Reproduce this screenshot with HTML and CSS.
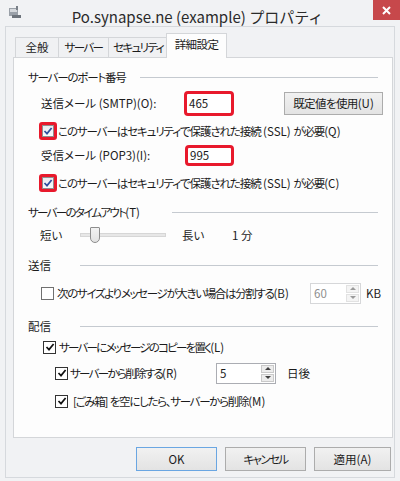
FILE: index.html
```html
<!DOCTYPE html>
<html lang="ja">
<head>
<meta charset="utf-8">
<title>プロパティ</title>
<link rel="stylesheet" href="styles.css">
</head>
<body>
<div class="titlebar">
  <svg class="appicon" width="14" height="13" viewBox="0 0 14 13">
    <rect x="1" y="2" width="9" height="8" fill="#9aa0a8"/>
    <rect x="2" y="3" width="7" height="3" fill="#d5d8dc"/>
    <rect x="4" y="9" width="9" height="3" fill="#6d737b"/>
    <rect x="8" y="0" width="2" height="4" fill="#7a8088"/>
  </svg>
  <div class="title">Po.synapse.ne (example) プロパティ</div>
  <div class="close">
    <svg width="9" height="9" viewBox="0 0 9 9"><path d="M1 1 L8 8 M8 1 L1 8" stroke="#fff" stroke-width="2"/></svg>
  </div>
</div>
<div class="client">
  <div class="tabs">
    <div class="tab t1">全般</div>
    <div class="tab t2"><span class="ls-kata">サーバー</span></div>
    <div class="tab t3"><span class="ls-kata">セキュリティ</span></div>
    <div class="tab active"><span class="ls-kanji">詳細設定</span></div>
  </div>
  <div class="panel">
    <div class="group-head gh-port"><span class="gh-label w-port"><span class="j-port">サーバーのポート番号</span></span><i class="rule"></i></div>

    <div class="row r-smtp">
      <span class="port-label">送信メール (SMTP)(O):</span>
      <div class="field hl f-smtp">465</div>
      <div class="btn btn-default"><span class="ls-kanji">既定値を使用</span>(U)</div>
    </div>

    <div class="row r-cb1">
      <span class="cb-hl"><span class="cb blue"><svg width="10" height="10" viewBox="0 0 10 10"><path d="M1.5 5 L4 7.6 L8.6 2" fill="none" stroke="#2e4f9e" stroke-width="1.7"/></svg></span></span>
      <span class="cb-text"><span class="j-ssl">このサーバーはセキュリティで保護された接続</span> (SSL) <span class="j-ssl">が必要</span>(Q)</span>
    </div>

    <div class="row r-pop">
      <span class="port-label">受信メール (POP3)(I):</span>
      <div class="field hl f-pop">995</div>
    </div>

    <div class="row r-cb2">
      <span class="cb-hl"><span class="cb blue"><svg width="10" height="10" viewBox="0 0 10 10"><path d="M1.5 5 L4 7.6 L8.6 2" fill="none" stroke="#2e4f9e" stroke-width="1.7"/></svg></span></span>
      <span class="cb-text"><span class="j-ssl">このサーバーはセキュリティで保護された接続</span> (SSL) <span class="j-ssl">が必要</span>(C)</span>
    </div>

    <div class="group-head gh-timeout"><span class="gh-label w-timeout"><span class="j-timeout">サーバーのタイムアウト</span>(T)</span><i class="rule"></i></div>

    <div class="row r-slider">
      <span class="sl-short">短い</span>
      <div class="track"><span class="thumb"></span></div>
      <span class="sl-long">長い</span>
      <span class="sl-val">1 分</span>
    </div>

    <div class="group-head gh-send"><span class="gh-label w-short">送信</span><i class="rule"></i></div>

    <div class="row r-split">
      <span class="cb plain gray"></span>
      <span class="split-label"><span class="j-split">次のサイズよりメッセージが大きい場合は分割する</span>(B)</span>
      <div class="spin disabled s-split">
        <span class="spin-val">60</span>
        <span class="spin-btns"><span class="sb up"></span><span class="sb down"></span></span>
      </div>
      <span class="unit">KB</span>
    </div>

    <div class="group-head gh-deliver"><span class="gh-label w-short">配信</span><i class="rule"></i></div>

    <div class="row r-copy">
      <span class="cb plain"><svg width="10" height="10" viewBox="0 0 10 10"><path d="M1.5 5 L4 7.6 L8.6 2" fill="none" stroke="#111" stroke-width="1.7"/></svg></span>
      <span class="cb-text"><span class="j-copy">サーバーにメッセージのコピーを置く</span>(L)</span>
    </div>

    <div class="row r-del">
      <span class="cb plain"><svg width="10" height="10" viewBox="0 0 10 10"><path d="M1.5 5 L4 7.6 L8.6 2" fill="none" stroke="#111" stroke-width="1.7"/></svg></span>
      <span class="del-label"><span class="j-del">サーバーから削除する</span>(R)</span>
      <div class="spin s-days">
        <span class="spin-val">5</span>
        <span class="spin-btns"><span class="sb up"></span><span class="sb down"></span></span>
      </div>
      <span class="days">日後</span>
    </div>

    <div class="row r-trash">
      <span class="cb plain"><svg width="10" height="10" viewBox="0 0 10 10"><path d="M1.5 5 L4 7.6 L8.6 2" fill="none" stroke="#111" stroke-width="1.7"/></svg></span>
      <span class="cb-text"><span class="j-trash">[ごみ箱]</span> <span class="j-trash">を空にしたら、サーバーから削除</span>(M)</span>
    </div>
  </div>

  <div class="buttons">
    <div class="btn b-ok">OK</div>
    <div class="btn b-cancel"><span class="ls-kata">キャンセル</span></div>
    <div class="btn b-apply">適用(A)</div>
  </div>
</div>
</body>
</html>
```

FILE: styles.css
```css
* { box-sizing: border-box; }

body {
  margin: 0;
  width: 400px;
  height: 481px;
  overflow: hidden;
  background: #f1f2f4;
  font-family: "Noto Sans CJK JP", "Noto Sans", sans-serif;
  font-size: 11.5px;
  color: #1b1b1b;
  font-feature-settings: "palt";
}

/* letter-spacing on Japanese runs, tuned to match the narrow UI font */
.ls-kata { letter-spacing: -1.6px; }
.ls-kanji { letter-spacing: -0.6px; }
.j-port { letter-spacing: -1.2px; }
.j-ssl { letter-spacing: -1.1px; }
.j-timeout { letter-spacing: -1.7px; }
.j-split { letter-spacing: -1.35px; }
.j-copy { letter-spacing: -1.8px; }
.j-del { letter-spacing: -1.7px; }
.j-trash { letter-spacing: -1.3px; }

/* title bar */
.titlebar {
  height: 26px;
  display: flex;
  align-items: flex-start;
}
.appicon { margin: 6px 0 0 8px; flex: none; }
.title {
  flex: 1;
  text-align: center;
  font-size: 15px;
  line-height: 20px;
  margin-top: 7px;
  color: #2a2a2a;
  white-space: nowrap;
  font-feature-settings: normal;
}
.close {
  width: 27px;
  height: 20px;
  background: #c7484b;
  display: flex;
  align-items: center;
  justify-content: center;
  flex: none;
}

/* client frame */
.client {
  margin-left: 5px;
  width: 390px;
  height: 452px;
  border: 1px solid #d6d9dd;
  padding: 6px 0 0 7px;
}

.tabs {
  display: flex;
  align-items: flex-end;
  height: 24px;
  padding-left: 2px;
}
.tab {
  height: 20px;
  border: 1px solid #d4d6d9;
  border-bottom: none;
  background: #f0f1f3;
  margin-right: -1px;
  text-align: center;
  line-height: 19px;
  white-space: nowrap;
}
.t1 { width: 44px; }
.t2 { width: 51px; }
.t3 { width: 60px; }
.tab.active {
  width: 61px;
  height: 25px;
  margin-bottom: -1px;
  margin-left: -1px;
  background: #fdfdfd;
  position: relative;
  z-index: 1;
  line-height: 21px;
}

.panel {
  width: 380px;
  height: 381px;
  border: 1px solid #d4d6d9;
  background: #fdfdfd;
  padding: 0 14px 0 14px;
}

/* group headers */
.group-head {
  display: flex;
  align-items: center;
  height: 16px;
}
.gh-label { flex: none; white-space: nowrap; }
.w-port { width: 112px; }
.w-timeout { width: 144px; }
.w-short { width: 52px; }
.rule {
  flex: 1;
  height: 1px;
  background: #c5cad0;
}
.gh-port { margin-top: 11px; }
.gh-timeout { margin-top: 11px; }
.gh-send { margin-top: 13px; }
.gh-deliver { margin-top: 14px; }

/* rows */
.row {
  display: flex;
  align-items: center;
  white-space: nowrap;
}
.r-smtp { height: 26px; margin-top: 5px; padding-left: 13px; }
.r-cb1 { height: 20px; margin-top: 5px; padding-left: 11px; }
.r-pop { height: 22px; margin-top: 3px; padding-left: 13px; }
.r-cb2 { height: 20px; margin-top: 7px; padding-left: 11px; }
.r-slider { height: 18px; margin-top: 6px; padding-left: 12px; }
.r-split { height: 22px; margin-top: 9px; padding-left: 13px; }
.r-copy { height: 20px; margin-top: 3px; padding-left: 15px; }
.r-del { height: 22px; margin-top: 5px; padding-left: 27px; }
.r-trash { height: 20px; margin-top: 7px; padding-left: 27px; }

.port-label { width: 143px; flex: none; }

.field {
  background: #fff;
  display: flex;
  align-items: center;
  padding-left: 2px;
  flex: none;
}
.hl {
  border: 3px solid #e8192c;
  border-radius: 4px;
}
.f-smtp { width: 50px; height: 25px; }
.f-pop { width: 49px; height: 21px; margin-left: 1px; }

.btn {
  display: flex;
  align-items: center;
  justify-content: center;
  background: linear-gradient(#f1f1f1, #e3e3e3);
  border: 1px solid #acacac;
  flex: none;
  white-space: nowrap;
}
.btn-default { width: 99px; height: 23px; margin-left: 50px; }

/* checkboxes */
.cb {
  width: 13px;
  height: 13px;
  background: #fff;
  border: 1px solid #333;
  display: flex;
  align-items: center;
  justify-content: center;
  flex: none;
}
.cb.gray { border-color: #707070; }
.cb.blue {
  width: 12px;
  height: 12px;
  border-color: #8e8f8f;
  background: linear-gradient(#e9ecf1, #fafbfc);
}
.cb-hl {
  width: 18px;
  height: 18px;
  border: 3px solid #e8192c;
  border-radius: 3px;
  display: flex;
  align-items: center;
  justify-content: center;
  flex: none;
}
.cb-hl + .cb-text { margin-left: 1px; }
.cb.plain + .cb-text { margin-left: 3px; }
.r-del .cb.plain, .r-trash .cb.plain { margin-right: 2px; }
.r-trash .cb-text { margin-left: 1px; }

/* slider */
.sl-short { width: 40px; flex: none; }
.track {
  position: relative;
  width: 86px;
  height: 4px;
  background: #e7e7e7;
  border: 1px solid #d6d6d6;
  flex: none;
}
.thumb {
  position: absolute;
  left: 9px;
  top: -7px;
  width: 10px;
  height: 16px;
  background: linear-gradient(#f2f2f2, #e2e2e2);
  border: 1px solid #8d8d8d;
  border-radius: 1px 1px 5px 5px;
}
.sl-long { margin-left: 16px; width: 50px; flex: none; }
.sl-val { flex: none; }

/* spinners */
.split-label { width: 253px; flex: none; margin-left: 3px; }
.spin {
  display: flex;
  height: 21px;
  background: #fff;
  border: 1px solid #abadb3;
  flex: none;
}
.spin.disabled { border-color: #d6d7d9; color: #8f8f8f; }
.s-split { width: 51px; }
.s-days { width: 60px; }
.spin-val { flex: 1; padding-left: 3px; line-height: 19px; }
.spin-btns {
  width: 15px;
  display: flex;
  flex-direction: column;
  padding: 1px;
  gap: 1px;
}
.sb {
  flex: 1;
  background: #ececec;
  border: 1px solid #c9c9c9;
  display: flex;
  align-items: center;
  justify-content: center;
}
.disabled .sb { background: #f4f4f4; border-color: #e2e2e2; }
.sb::after {
  content: "";
  width: 0;
  height: 0;
  border-left: 3px solid transparent;
  border-right: 3px solid transparent;
}
.sb.up::after { border-bottom: 3px solid #404040; }
.sb.down::after { border-top: 3px solid #404040; }
.disabled .sb.up::after { border-bottom-color: #9a9a9a; }
.disabled .sb.down::after { border-top-color: #9a9a9a; }
.unit { margin-left: 5px; }

.del-label { width: 146px; flex: none; }
.days { margin-left: 11px; }

/* bottom buttons */
.buttons {
  display: flex;
  gap: 8px;
  margin-top: 9px;
  padding-left: 123px;
}
.buttons .btn { height: 24px; }
.b-ok { width: 81px; border-color: #6aa6e2; }
.b-cancel { width: 81px; }
.b-apply { width: 77px; }
```
